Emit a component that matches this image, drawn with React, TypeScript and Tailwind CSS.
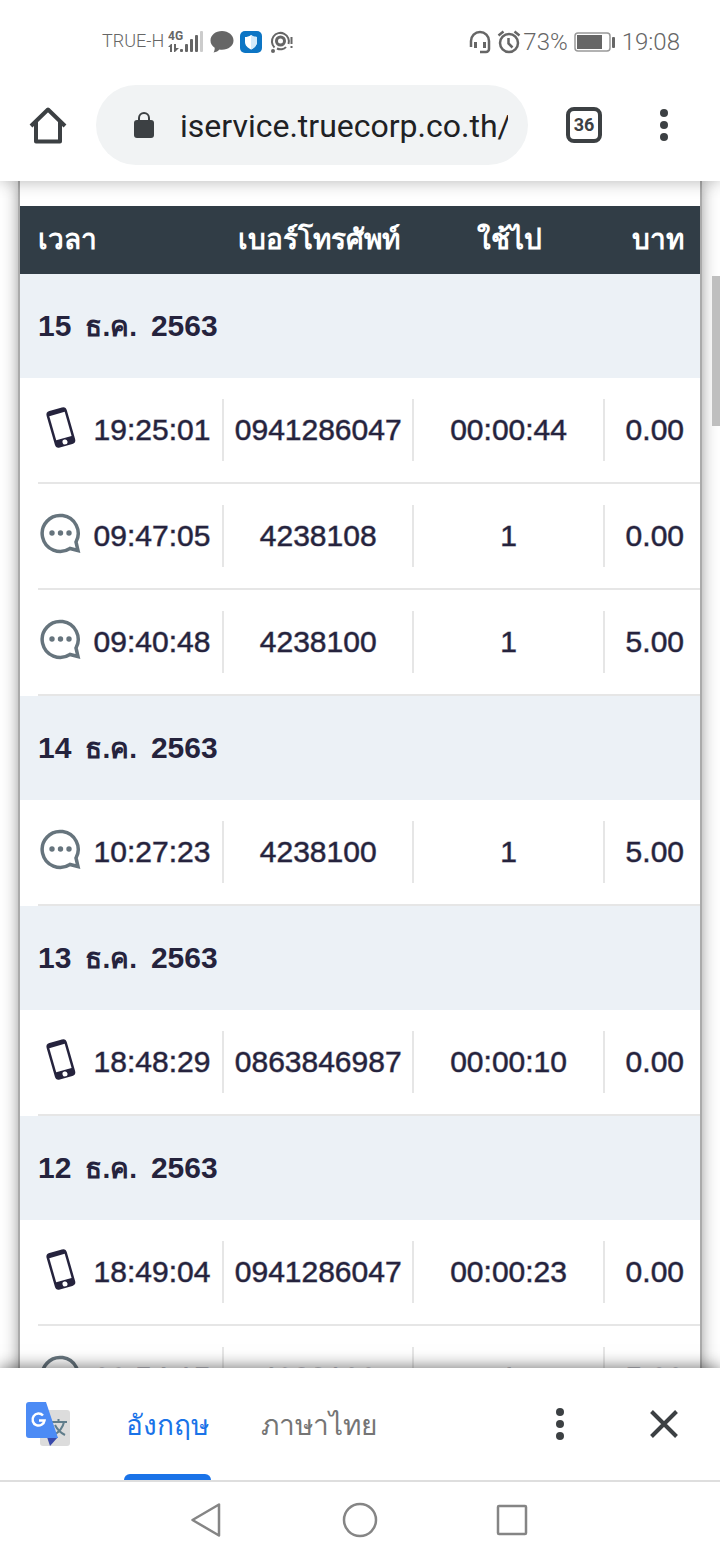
import type { ReactNode } from 'react'

type Call = { kind: 'voice' | 'sms'; time: string; number: string; used: string; baht: string }

const days: { date: string[]; calls: Call[] }[] = [
    {
        date: ['15', 'ธ.ค.', '2563'],
        calls: [
            { kind: 'voice', time: '19:25:01', number: '0941286047', used: '00:00:44', baht: '0.00' },
            { kind: 'sms', time: '09:47:05', number: '4238108', used: '1', baht: '0.00' },
            { kind: 'sms', time: '09:40:48', number: '4238100', used: '1', baht: '5.00' },
        ],
    },
    {
        date: ['14', 'ธ.ค.', '2563'],
        calls: [{ kind: 'sms', time: '10:27:23', number: '4238100', used: '1', baht: '5.00' }],
    },
    {
        date: ['13', 'ธ.ค.', '2563'],
        calls: [{ kind: 'voice', time: '18:48:29', number: '0863846987', used: '00:00:10', baht: '0.00' }],
    },
    {
        date: ['12', 'ธ.ค.', '2563'],
        calls: [
            { kind: 'voice', time: '18:49:04', number: '0941286047', used: '00:00:23', baht: '0.00' },
            { kind: 'sms', time: '09:54:15', number: '4238100', used: '1', baht: '5.00' },
        ],
    },
]

function PhoneIcon() {
    return (
        <svg viewBox="0 0 44 44" className="mb-[6px] h-11 w-11 shrink-0" role="img" aria-label="โทร">
            <g transform="translate(1 1) rotate(-16 22 22)">
                <rect x="11.5" y="2.5" width="21" height="38" rx="4" fill="#25233d" />
                <rect x="14" y="7.5" width="16" height="25" fill="#fff" />
                <circle cx="22" cy="36.5" r="2.5" fill="#fff" />
            </g>
        </svg>
    )
}

function SmsIcon() {
    return (
        <svg viewBox="0 0 44 44" className="mb-[6px] h-11 w-11 shrink-0" role="img" aria-label="SMS">
            <path
                d="M38 31A18 18 0 1 0 32 37.500L40 39.500Z"
                fill="none"
                stroke="#66747d"
                strokeWidth="3.5"
            />
            <g fill="#66747d">
                <circle cx="14" cy="22" r="2.7" />
                <circle cx="22.5" cy="22" r="2.7" />
                <circle cx="31" cy="22" r="2.7" />
            </g>
        </svg>
    )
}

function Dots() {
    return (
        <svg viewBox="0 0 8 32" className="h-8 w-2" fill="#3c4043">
            <circle cx="4" cy="4" r="4" />
            <circle cx="4" cy="16" r="4" />
            <circle cx="4" cy="28" r="4" />
        </svg>
    )
}

function StatusBar() {
    return (
        <div className="flex h-[84px] items-center justify-between pr-10 pl-[102px] text-[#666]">
            <div className="flex items-center">
                <span className="pb-1 text-[18px] font-light">TRUE-H</span>
                <svg viewBox="0 0 36 24" className="ml-1 h-6 w-9" fill="#666">
                    <text x="0" y="10" fontSize="12" fontWeight="700" fontFamily="Roboto, sans-serif">4G</text>
                    <path d="M0 17l3-3h1v8H2v-5zM6 14h2v4h3l-4 4H6z" />
                    <rect x="12" y="19" width="3" height="3" rx="1" />
                    <rect x="17" y="14" width="3" height="8" rx="1" />
                    <rect x="22" y="9" width="3" height="13" rx="1" />
                    <rect x="27" y="5" width="3" height="17" rx="1" />
                    <rect x="32" y="1" width="3" height="21" rx="1" fill="#ccc" />
                </svg>
                <svg viewBox="0 0 24 22" className="ml-1.5 h-[22px] w-6" fill="#666">
                    <path d="M12 0C5.500 0 0.500 4.200 0.500 9.500c0 3 1.500 5.400 4.200 7.200 0 2-.3 3.300-1.200 4.800 2.700-.3 4.700-1.500 6-3 .8.100 1.600.2 2.500.2 6.400 0 11.500-4 11.500-9.200S18.500 0 12 0z" />
                </svg>
                <svg viewBox="0 0 22 22" className="ml-1.5 h-[22px] w-[22px]">
                    <rect width="22" height="22" rx="5" fill="#0d75c4" />
                    <path d="M11 4c2 1.500 4 2 6 2v5c0 3.500-2.500 5.500-6 7.500C7.500 16.500 5 14.500 5 11V6c2 0 4-.5 6-2z" fill="#fff" />
                    <path d="M11 4c2 1.500 4 2 6 2v5c0 3.500-2.500 5.500-6 7.500z" fill="#d3eafa" />
                </svg>
                <svg viewBox="0 0 24 24" className="ml-2 h-6 w-6" fill="none" stroke="#666" strokeWidth="2">
                    <path d="M4.500 17.500A8.500 8.500 0 1 1 18.500 14" />
                    <circle cx="10.500" cy="11" r="4" strokeWidth="3" />
                    <path d="M7 18.500c3 1.500 7 1 9-1.500" />
                    <circle cx="3" cy="21" r="2" fill="#666" stroke="none" />
                    <path d="M21.500 7v7M21.500 16v2" />
                </svg>
            </div>
            <div className="flex items-center text-2xl font-light">
                <svg viewBox="0 0 22 24" className="h-6 w-[22px]" fill="none" stroke="#666" strokeWidth="2.500">
                    <path d="M2 17V11a9 9 0 0 1 18 0v8a3 3 0 0 1-3 3h-6" />
                    <path d="M6.500 12v6M15.500 12v6" strokeWidth="3" />
                </svg>
                <svg viewBox="0 0 24 24" className="mr-0.5 ml-1.5 h-6 w-6" fill="none" stroke="#666" strokeWidth="2.500">
                    <circle cx="12" cy="13" r="9" />
                    <path d="M11.500 8v5.500l4 4M1.500 5.500l5-4M22.500 5.500l-5-4" />
                </svg>
                <span>73%</span>
                <svg viewBox="0 0 42 22" className="mx-1.5 h-[22px] w-[42px]">
                    <rect x="1" y="2" width="35" height="18" rx="3" fill="none" stroke="#999" strokeWidth="1.500" />
                    <rect x="3" y="4" width="25" height="14" fill="#666" />
                    <rect x="38" y="6" width="3" height="11" rx="1" fill="#666" />
                </svg>
                <span>19:08</span>
            </div>
        </div>
    )
}

function Toolbar() {
    return (
        <div className="flex items-center pt-px pr-9 pb-4 pl-7">
            <button type="button" aria-label="Home" className="flex h-10 w-10 items-center justify-center">
                <svg viewBox="0 0 40 40" className="h-10 w-10" fill="none" stroke="#3c4043" strokeWidth="4">
                    <path d="M3 21L20 4.500 37 21M8 17v19.500h24V17" strokeLinejoin="round" />
                </svg>
            </button>
            <div className="ml-7 flex h-20 min-w-0 flex-1 items-center rounded-full bg-[#f1f3f4] pr-5 pl-[38px]">
                <svg viewBox="0 0 20 26" className="h-[26px] w-5 shrink-0">
                    <rect y="8" width="20" height="18" rx="3" fill="#3c4043" />
                    <path d="M5 9V6a5 5 0 0 1 10 0v3" fill="none" stroke="#3c4043" strokeWidth="2" />
                </svg>
                <input
                    type="text"
                    aria-label="Address"
                    defaultValue="iservice.truecorp.co.th/"
                    className="ml-[26px] min-w-0 flex-1 bg-transparent pt-0.5 text-[32px] text-[#202124] outline-none"
                />
            </div>
            <button
                type="button"
                aria-label="Tabs"
                className="ml-[38px] h-9 w-9 rounded-lg border-4 border-[#3c4043] text-[18px] leading-7 font-bold text-[#3c4043]"
            >
                36
            </button>
            <button type="button" aria-label="Menu" className="ml-[42px] flex h-10 w-10 items-center justify-center">
                <Dots />
            </button>
        </div>
    )
}

function Cell({ children, last = false }: { children: ReactNode; last?: boolean }) {
    return (
        <div className="flex h-[106px] items-center border-b-2 border-[#e6e6e6]">
            <div
                className={
                    last
                        ? 'flex h-[62px] w-full items-center justify-end pr-4'
                        : 'flex h-[62px] w-full items-center justify-center border-r-2 border-[#e6e6e6]'
                }
            >
                {children}
            </div>
        </div>
    )
}

function CallTable() {
    return (
        <table className="w-full table-fixed border-collapse text-[30px] leading-9 text-[#25233d]">
            <thead>
                <tr className="h-[68px] bg-[#313d46] text-[28px] text-white">
                    <th scope="col" className="w-[30%] pl-[18px] text-left font-bold">เวลา</th>
                    <th scope="col" className="w-[28%] text-center font-bold whitespace-nowrap">เบอร์โทรศัพท์</th>
                    <th scope="col" className="w-[28%] text-center font-bold">ใช้ไป</th>
                    <th scope="col" className="w-[14%] pr-4 text-right font-bold">บาท</th>
                </tr>
            </thead>
            {days.map((day) => (
                <tbody key={day.date[0]}>
                    <tr className="h-[104px] bg-[#ecf1f6]">
                        <th scope="rowgroup" colSpan={4} className="pl-[18px] text-left font-bold">
                            <div className="flex items-baseline gap-3.5">
                                <span>{day.date[0]}</span>
                                <span className="text-[28px]">{day.date[1]}</span>
                                <span>{day.date[2]}</span>
                            </div>
                        </th>
                    </tr>
                    {day.calls.map((call) => (
                        <tr key={call.time} className="[-webkit-text-stroke:1px_#25233d80]">
                            <td className="pl-[18px]">
                                <Cell>
                                    <div className="flex w-full items-center">
                                        {call.kind === 'voice' ? <PhoneIcon /> : <SmsIcon />}
                                        <span className="flex-1 text-center">{call.time}</span>
                                    </div>
                                </Cell>
                            </td>
                            <td><Cell>{call.number}</Cell></td>
                            <td><Cell>{call.used}</Cell></td>
                            <td><Cell last>{call.baht}</Cell></td>
                        </tr>
                    ))}
                </tbody>
            ))}
        </table>
    )
}

function TranslateBar() {
    return (
        <div className="relative flex h-28 shrink-0 items-center bg-white pr-9 pl-6 shadow-[0_0_16px_rgba(0,0,0,0.6)]">
            <svg viewBox="0 0 48 48" className="h-12 w-12 shrink-0" role="img" aria-label="Google Translate">
                <rect x="16" y="10" width="30" height="36" rx="3" fill="#dcdcdc" />
                <path d="M27 22h16M34.500 19v3M40 22c-1 5-5 10-10 13M31 25c2 4 6 8 10 10" fill="none" stroke="#607d8b" strokeWidth="2" />
                <path d="M23 37h11l-8 9z" fill="#3949ab" />
                <path d="M5 2h17l12 36H5a3 3 0 0 1-3-3V5a3 3 0 0 1 3-3z" fill="#4c8bf5" />
                <path d="M19 15.500a6 6 0 1 0 1.500 5h-5.500" fill="none" stroke="#fff" strokeWidth="2.500" />
            </svg>
            <div role="tablist" className="ml-10 flex h-full text-[28px]">
                <button type="button" role="tab" aria-selected="true" className="relative px-3.5 pt-1 text-[#1a73e8]">
                    อังกฤษ
                    <span className="absolute inset-x-3 bottom-0 h-[6px] rounded-t-md bg-[#1a73e8]" />
                </button>
                <button type="button" role="tab" aria-selected="false" className="ml-6 px-3.5 pt-1 text-[#757575]">
                    ภาษาไทย
                </button>
            </div>
            <button type="button" aria-label="Options" className="ml-auto flex h-10 w-10 items-center justify-center">
                <Dots />
            </button>
            <button type="button" aria-label="Close" className="ml-16 flex h-10 w-10 items-center justify-center">
                <svg viewBox="0 0 28 28" className="h-7 w-7" stroke="#3c4043" strokeWidth="4">
                    <path d="M1.500 1.500l25 25M26.500 1.500l-25 25" />
                </svg>
            </button>
        </div>
    )
}

function NavBar() {
    return (
        <nav className="relative flex h-20 shrink-0 items-center justify-center gap-[116px] border-t-2 border-[#dedede] bg-white pb-0.5">
            <button type="button" aria-label="Back">
                <svg viewBox="0 0 36 36" className="h-9 w-9" fill="none" stroke="#858585" strokeWidth="2.500" strokeLinejoin="round">
                    <path d="M29 2.500v31L2.500 18z" />
                </svg>
            </button>
            <button type="button" aria-label="Home">
                <svg viewBox="0 0 36 36" className="h-9 w-9" fill="none" stroke="#858585" strokeWidth="2.500">
                    <circle cx="18" cy="18" r="16" />
                </svg>
            </button>
            <button type="button" aria-label="Recent apps">
                <svg viewBox="0 0 36 36" className="h-9 w-9" fill="none" stroke="#858585" strokeWidth="2.500">
                    <rect x="4" y="4" width="28" height="28" rx="1" />
                </svg>
            </button>
        </nav>
    )
}

export default function App() {
    return (
        <div className="flex h-screen flex-col overflow-hidden bg-white font-['Roboto','Noto_Sans',sans-serif]">
            <header className="relative z-10 shrink-0 bg-white shadow-[0_0_16px_rgba(0,0,0,0.3)]">
                <StatusBar />
                <Toolbar />
            </header>
            <main className="relative min-h-0 flex-1 overflow-hidden px-5 font-['Liberation_Sans','Noto_Sans',sans-serif]">
                <div className="bg-white pt-[25px] shadow-[0_0_0_2px_#aaa,0_0_16px_rgba(0,0,0,0.5)]">
                    <CallTable />
                </div>
                <div className="absolute top-[95px] right-0 h-[150px] w-2 bg-[#bfbfbf]" />
            </main>
            <TranslateBar />
            <NavBar />
        </div>
    )
}
